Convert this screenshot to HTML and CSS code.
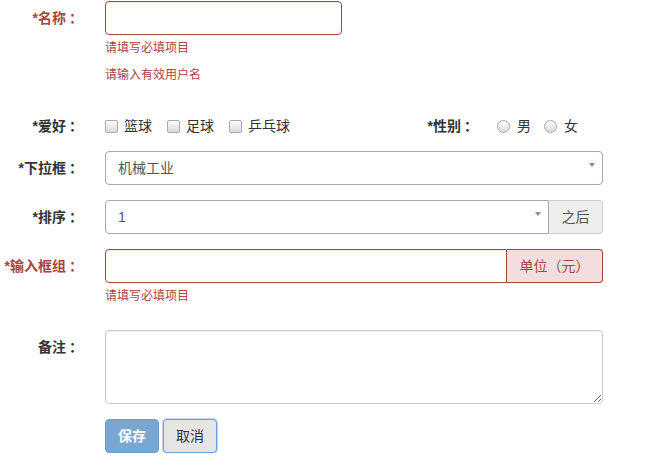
FILE: index.html
```html
<!DOCTYPE html>
<html lang="zh-CN">
<head>
<meta charset="utf-8">
<title>表单</title>
<link rel="stylesheet" href="styles.css">
</head>
<body>
<form class="form">
  <div class="group has-error">
    <label class="label">*名称<span class="colon">：</span></label>
    <div class="control">
      <input class="input name-input" type="text">
      <p class="help">请填写必填项目</p>
      <p class="help">请输入有效用户名</p>
    </div>
  </div>

  <div class="group">
    <label class="label">*爱好<span class="colon">：</span></label>
    <div class="control inline-row">
      <div class="checks">
        <label class="opt"><input class="check" type="checkbox"><span>篮球</span></label>
        <label class="opt"><input class="check" type="checkbox"><span>足球</span></label>
        <label class="opt"><input class="check" type="checkbox"><span>乒乓球</span></label>
      </div>
      <span class="sub-label">*性别<span class="colon">：</span></span>
      <div class="radios">
        <label class="opt"><input class="radio" type="radio" name="sex"><span>男</span></label>
        <label class="opt"><input class="radio" type="radio" name="sex"><span>女</span></label>
      </div>
    </div>
  </div>

  <div class="group">
    <label class="label">*下拉框<span class="colon">：</span></label>
    <div class="control">
      <div class="select"><span class="select-text">机械工业</span><span class="caret"></span></div>
    </div>
  </div>

  <div class="group">
    <label class="label">*排序<span class="colon">：</span></label>
    <div class="control input-group">
      <div class="select select-left"><span class="select-text">1</span><span class="caret"></span></div>
      <span class="addon">之后</span>
    </div>
  </div>

  <div class="group has-error">
    <label class="label">*输入框组<span class="colon">：</span></label>
    <div class="control">
      <div class="input-group">
        <input class="input input-left" type="text">
        <span class="addon addon-error">单位（元）</span>
      </div>
      <p class="help">请填写必填项目</p>
    </div>
  </div>

  <div class="group">
    <label class="label">备注<span class="colon">：</span></label>
    <div class="control">
      <textarea class="textarea" rows="3"></textarea>
    </div>
  </div>

  <div class="actions">
    <button class="btn btn-primary" type="button">保存</button>
    <button class="btn btn-default" type="button">取消</button>
  </div>
</form>
</body>
</html>
```

FILE: styles.css
```css
html, body {
  margin: 0;
  padding: 0;
  background: #fff;
}

body {
  font-family: "Liberation Sans", "Noto Sans CJK SC", sans-serif;
  font-size: 14px;
  line-height: 20px;
  color: #333;
}

.form {
  padding-top: 1px;
}

.group {
  display: flex;
  align-items: flex-start;
  gap: 22px;
  margin-bottom: 15px;
}

.label {
  flex: none;
  box-sizing: border-box;
  width: 83px;
  height: 27px;
  padding-top: 7px;
  text-align: right;
  font-weight: bold;
  line-height: 20px;
  white-space: nowrap;
}

.colon {
  padding-left: 3px;
}

.has-error .label {
  color: #a94442;
}

.control {
  flex: none;
  width: 498px;
}

.input {
  display: block;
  box-sizing: border-box;
  height: 34px;
  margin: 0;
  padding: 6px 12px;
  border: 1px solid #ccc;
  border-radius: 4px;
  background: #fff;
  font: inherit;
  color: #555;
  box-shadow: inset 0 1px 1px rgba(0, 0, 0, 0.075);
  outline: none;
}

.has-error .input {
  border-color: #a94442;
}

.name-input {
  width: 237px;
}

.help {
  margin: 5px 0 10px;
  font-size: 12px;
  line-height: 17px;
  color: #a94442;
}

/* checkbox / radio row */
.inline-row {
  display: flex;
  align-items: center;
  height: 20px;
  padding-top: 7px;
}

.checks {
  display: flex;
  align-items: center;
  gap: 15px;
  width: 311px;
  flex: none;
}

.radios {
  display: flex;
  align-items: center;
  gap: 13px;
}

.opt {
  display: flex;
  align-items: center;
  gap: 6px;
  color: #333;
}

.radios .opt {
  gap: 7px;
}

.check,
.radio {
  -webkit-appearance: none;
  appearance: none;
  box-sizing: border-box;
  width: 13px;
  height: 13px;
  margin: 0;
  border: 1px solid #a9a9a9;
  background: linear-gradient(#fdfdfd, #dadada);
  flex: none;
}

.check {
  border-radius: 2px;
}

.radio {
  border-radius: 50%;
}

.sub-label {
  flex: none;
  width: 62px;
  margin-right: 19px;
  text-align: right;
  font-weight: bold;
  white-space: nowrap;
}

/* select */
.select {
  display: flex;
  box-sizing: border-box;
  height: 34px;
  padding: 6px 7px 6px 12px;
  border: 1px solid #aaa;
  border-radius: 4px;
  background: #fff;
  color: #555;
}

.select-text {
  flex: 1;
}

.caret {
  align-self: flex-start;
  margin-top: 5px;
  width: 0;
  height: 0;
  border-left: 3px solid transparent;
  border-right: 3px solid transparent;
  border-top: 4px solid #8a8a8a;
}

.input-group {
  display: flex;
}

.select-left {
  flex: 1;
  border-radius: 4px 0 0 4px;
}

.input-left {
  flex: 1;
  min-width: 0;
  border-radius: 4px 0 0 4px;
}

.addon {
  flex: none;
  box-sizing: border-box;
  width: 54px;
  height: 34px;
  padding: 6px 0;
  border: 1px solid #ccc;
  border-left: 0;
  border-radius: 0 4px 4px 0;
  background: #eee;
  color: #555;
  text-align: center;
}

.addon-error {
  width: 96px;
  border-color: #a94442;
  background: #f2dede;
  color: #a94442;
}

.textarea {
  display: block;
  box-sizing: border-box;
  width: 498px;
  height: 74px;
  margin: 0;
  padding: 6px 12px;
  border: 1px solid #ccc;
  border-radius: 4px;
  font: inherit;
  color: #555;
  resize: vertical;
  box-shadow: inset 0 1px 1px rgba(0, 0, 0, 0.075);
  outline: none;
}

/* buttons */
.actions {
  display: flex;
  gap: 4px;
  margin-left: 105px;
}

.btn {
  box-sizing: border-box;
  height: 34px;
  margin: 0;
  padding: 6px 12px;
  border: 1px solid transparent;
  border-radius: 4px;
  font: inherit;
  line-height: 20px;
  cursor: pointer;
}

.btn-primary {
  background: #7aa7d1;
  border-color: #6f9cc6;
  color: #fff;
  font-weight: bold;
}

.btn-default {
  background: #e6e6e6;
  border-color: #6a9fe0;
  color: #333;
  box-shadow: 0 0 0 1px rgba(110, 165, 235, 0.45);
}
```
